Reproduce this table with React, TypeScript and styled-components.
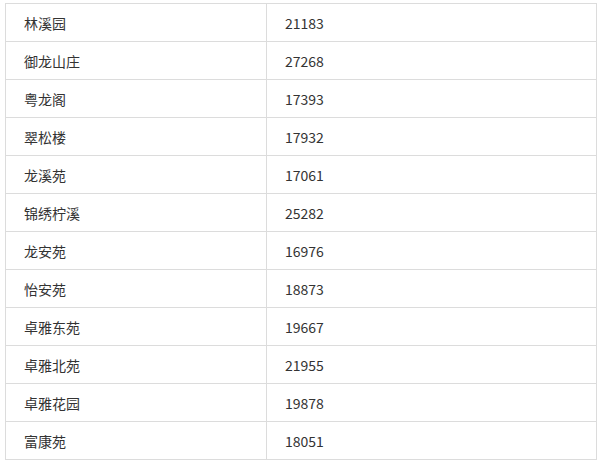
import React from "react";
import styled, { createGlobalStyle } from "styled-components";

const Global = createGlobalStyle`
  html, body { margin: 0; padding: 0; background: #fff; }
  body { font-family: "Noto Sans CJK SC", "Microsoft YaHei", sans-serif; }
`;

const Wrap = styled.div`
  padding: 3px 0 0 5px;
`;

const Table = styled.table`
  border-collapse: collapse;
  width: 592px;
  table-layout: fixed;
  color: #333;
  font-size: 14px;
`;

const Row = styled.tr`
  height: 38px;
`;

const Cell = styled.td<{ $w?: number }>`
  border: 1px solid #dcdcdc;
  padding: 0 0 0 18px;
  height: 37px;
  box-sizing: border-box;
  vertical-align: middle;
  line-height: 20px;
  ${(p) => (p.$w ? `width: ${p.$w}px;` : "")}
`;

const rows: [string, string][] = [
  ["林溪园", "21183"],
  ["御龙山庄", "27268"],
  ["粤龙阁", "17393"],
  ["翠松楼", "17932"],
  ["龙溪苑", "17061"],
  ["锦绣柠溪", "25282"],
  ["龙安苑", "16976"],
  ["怡安苑", "18873"],
  ["卓雅东苑", "19667"],
  ["卓雅北苑", "21955"],
  ["卓雅花园", "19878"],
  ["富康苑", "18051"],
];

export default function App() {
  return (
    <>
      <Global />
      <Wrap>
        <Table>
          <tbody>
            {rows.map(([n, v]) => (
              <Row key={n}>
                <Cell $w={261}>{n}</Cell>
                <Cell>{v}</Cell>
              </Row>
            ))}
          </tbody>
        </Table>
      </Wrap>
    </>
  );
}
